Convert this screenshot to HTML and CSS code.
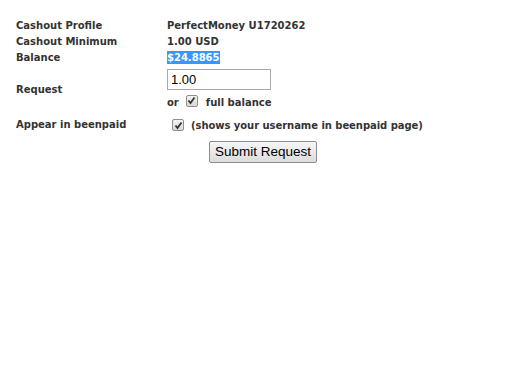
FILE: index.html
```html
<!DOCTYPE html>
<html>
<head>
<meta charset="utf-8">
<link rel="stylesheet" href="styles.css">
</head>
<body>
<div class="form">
  <div class="row"><div class="label">Cashout Profile</div><div class="value">PerfectMoney U1720262</div></div>
  <div class="row"><div class="label">Cashout Minimum</div><div class="value">1.00 USD</div></div>
  <div class="row"><div class="label">Balance</div><div class="value"><span class="sel">$24.8865</span></div></div>
  <div class="row request">
    <div class="label">Request</div>
    <div class="value">
      <div class="input">1.00</div>
      <div class="orline">or <span class="cb cb1"><svg width="9" height="9" viewBox="0 0 9 9"><path d="M1.5 4.5 L3.5 7 L7.5 1.5" fill="none" stroke="#333" stroke-width="1.8"/></svg></span> full balance</div>
    </div>
  </div>
  <div class="row appear">
    <div class="label">Appear in beenpaid</div>
    <div class="value"><span class="cb cb2"><svg width="9" height="9" viewBox="0 0 9 9"><path d="M1.5 4.5 L3.5 7 L7.5 1.5" fill="none" stroke="#333" stroke-width="1.8"/></svg></span> (shows your username in beenpaid page)</div>
  </div>
  <div class="submitrow"><span class="btn">Submit Request</span></div>
</div>
</body>
</html>
```
FILE: styles.css
```css
html, body { margin: 0; padding: 0; background: #fff; }
body { font-family: "DejaVu Sans", Verdana, sans-serif; font-size: 10px; font-weight: bold; color: #333; }
.form { padding: 17px 0 0 16px; width: 430px; }
.row { display: flex; align-items: center; height: 16px; }
.label { width: 151px; flex: none; }
.sel { background: #3399ff; color: #fff; padding: 1px 0; }
.request { height: 44px; margin-top: 2px; }
.request .value { display: flex; flex-direction: column; align-self: flex-start; padding-top: 2px; }
.input { width: 99px; height: 19px; border: 1px solid #a9a9a9; font-family: "Liberation Sans", Arial, sans-serif; font-weight: normal; font-size: 13px; color: #000; line-height: 19px; padding-left: 3px; box-sizing: content-box; }
.orline { display: flex; align-items: center; margin-top: 7px; }
.cb { display: inline-flex; align-items: center; justify-content: center; width: 10px; height: 10px; border: 1px solid #8f8f8f; border-radius: 2px; background: linear-gradient(#f4f4f4, #d8d8d8); }
.cb1 { margin: -4px 8px 0 7px; }
.appear { height: 20px; margin-top: 7px; align-items: flex-start; }
.appear .label { padding-top: 1px; }
.cb2 { margin: 0 7px 0 5px; }
.appear .value { display: flex; align-items: center; padding-top: 1px; letter-spacing: -0.05px; }
.submitrow { padding-left: 193px; margin-top: 3px; }
.btn { display: inline-block; width: 106px; height: 20px; border: 1px solid #8c8c8c; border-radius: 2px; background: linear-gradient(#f6f6f6, #dcdcdc); font-family: "Liberation Sans", Arial, sans-serif; font-weight: normal; font-size: 13.5px; color: #000; text-align: center; line-height: 20px; }
```
